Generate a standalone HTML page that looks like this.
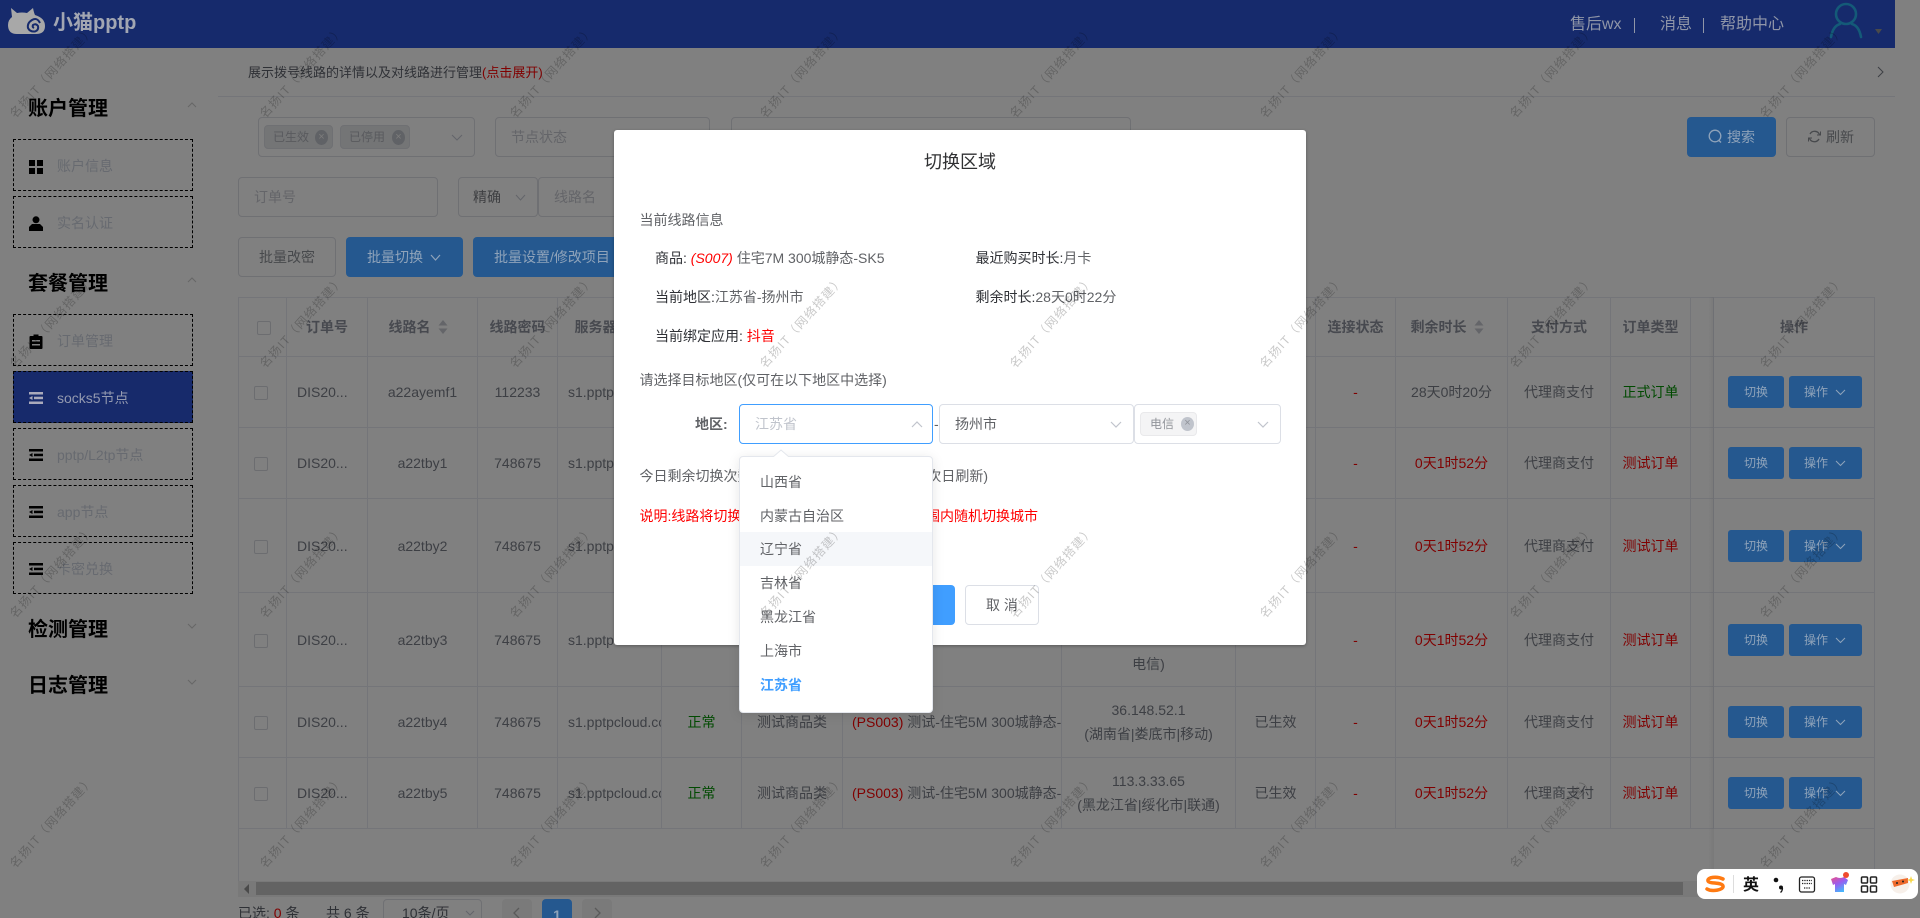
<!DOCTYPE html>
<html lang="zh"><head><meta charset="utf-8"><title>切换区域</title>
<style>
*{box-sizing:border-box}
html{margin:0;padding:0;width:1920px;height:918px;overflow:hidden}
body{margin:0;padding:0;width:1920px;height:918px;overflow:hidden;position:relative;background:#808080;font-family:"Liberation Sans","Noto Sans CJK SC",sans-serif;font-size:14px;color:#3d3f44}
.a{position:absolute;white-space:nowrap;line-height:20px}
.box{position:absolute;border:1px solid #6f7073;border-radius:4px}
.sec{position:absolute;left:28px;font-size:20px;font-weight:700;color:#000;line-height:28px;white-space:nowrap}
.it{position:absolute;left:13px;width:180px;height:52px;border:1px dashed #000;color:#676a70}
.it svg{position:absolute;left:15px}
.it span{position:absolute;left:43px;top:16px;line-height:20px;white-space:nowrap}
.btn{position:absolute;border-radius:4px;text-align:center;white-space:nowrap}
.pri{background:#25588f;color:#8fa3ba}
.def{border:1px solid #6f7073;color:#47494c}
.tag{position:absolute;height:24px;background:#747576;border:1px solid #6f7073;border-radius:4px;font-size:12px;color:#595a5e;line-height:22px;padding-left:8px}
.tag i{position:absolute;right:4px;top:4px;width:13px;height:15px;border-radius:50%;background:#606266;color:#7c7c7c;font-style:normal;font-size:11px;line-height:14px;text-align:center;padding:0}
table{position:absolute;left:238px;top:297px;border-collapse:separate;border-spacing:0;table-layout:fixed;width:1637px}
td,th{border-right:1px solid #747579;border-bottom:1px solid #747579;padding:0;text-align:center;overflow:hidden;white-space:nowrap;font-weight:400;line-height:24px}
th{border-top:1px solid #747579;font-weight:700;color:#47494f;height:60px}
td{height:71px}
tr.t td{height:94px}
td:first-child,th:first-child{border-left:1px solid #747579}
.l{text-align:left;padding-left:10px}
.r{color:#800000}.g{color:#004a00}
.cb{display:inline-block;width:14px;height:14px;border:1px solid #6c6d70;border-radius:2px;vertical-align:middle;margin-left:-3px}
.sw,.op{position:absolute;top:0;height:32px;border-radius:3px;background:#25588f;color:#8fa3ba;font-size:12px;line-height:32px;text-align:center}
.wm{position:absolute;font-size:12px;letter-spacing:1.2px;line-height:14px;color:rgba(0,0,0,.22);white-space:nowrap;transform:translate(-50%,-50%) rotate(-48deg);z-index:50}
.dlg{position:absolute;left:614px;top:130px;width:692px;height:515px;background:#fff;border-radius:3px;box-shadow:0 1px 3px rgba(0,0,0,.3)}
.sel{position:absolute;top:404px;height:40px;border:1px solid #dcdfe6;border-radius:4px;background:#fff}
.dp{position:absolute;left:739px;top:456px;width:194px;height:257px;background:#fff;border:1px solid #e4e7ed;border-radius:4px;box-shadow:0 2px 12px rgba(0,0,0,.1)}
.dp div{position:absolute;left:0;width:192px;height:34px;line-height:35px;padding-left:20px;color:#606266;font-size:14px}
.dk{color:#2f3136}.gy{color:#606266}
</style></head><body>

<!-- header -->
<div style="position:absolute;left:0;top:0;width:1895px;height:48px;background:#162a6c"></div>
<svg style="position:absolute;left:8px;top:8px" width="38" height="28" viewBox="0 0 38 28"><path d="M3 0 L9 5 Q14 4 19 5 L25 0 Q26 5 27 7 Q37 10 37 18 Q37 26 28 26 L9 26 Q0 26 0 17 Q0 12 4 9 Z" fill="#a8a8a8"/><path d="M32 15 Q29 9 24 12 Q19 15 20 20 Q22 24 27 23.500 Q31 22 30 18 Q28 15 25 17 Q24 19 26 20" fill="none" stroke="#162a6c" stroke-width="2"/></svg>
<div class="a" style="left:53px;top:13px;font-size:20px;font-weight:700;color:#a2a6b2">小猫pptp</div>
<div class="a" style="left:1570px;top:15px;font-size:16px;color:#9096a8">售后wx</div>
<div style="position:absolute;left:1634px;top:18px;width:1px;height:15px;background:#9096a8"></div>
<div class="a" style="left:1660px;top:15px;font-size:16px;color:#9096a8">消息</div>
<div style="position:absolute;left:1703px;top:18px;width:1px;height:15px;background:#9096a8"></div>
<div class="a" style="left:1720px;top:15px;font-size:16px;color:#9096a8">帮助中心</div>
<svg style="position:absolute;left:1828px;top:2px" width="60" height="38" viewBox="0 0 60 38"><circle cx="18" cy="12" r="10" fill="none" stroke="#145a78" stroke-width="2.600"/><path d="M3 35 Q5 24 12 22 M24 22 Q31 24 33 35" fill="none" stroke="#145a78" stroke-width="2.600" stroke-linecap="round"/><path d="M47 27 L54 27 L50.500 32 Z" fill="#4a4a4a"/></svg>

<!-- sidebar -->
<div class="sec" style="top:95px">账户管理</div>
<svg style="position:absolute;left:187px;top:102px" width="10" height="6"><path d="M1 5 L5 1 L9 5" fill="none" stroke="#666" stroke-width="1"/></svg>
<div class="it" style="top:139px"><svg style="top:20px" width="14" height="14"><rect width="6" height="6" fill="#000"/><rect x="8" width="6" height="6" fill="#000"/><rect y="8" width="6" height="6" fill="#000"/><rect x="8" y="8" width="6" height="6" fill="#000"/></svg><span>账户信息</span></div>
<div class="it" style="top:196px"><svg style="top:19px" width="14" height="15"><circle cx="7" cy="3.800" r="3.500" fill="#000"/><path d="M3 8 L11 8 L14 11 L14 15 L0 15 L0 11 Z" fill="#000"/></svg><span>实名认证</span></div>
<div class="sec" style="top:270px">套餐管理</div>
<svg style="position:absolute;left:187px;top:277px" width="10" height="6"><path d="M1 5 L5 1 L9 5" fill="none" stroke="#666" stroke-width="1"/></svg>
<div class="it" style="top:314px"><svg style="top:19px" width="14" height="15"><path d="M1.500 2 L4.500 2 L4.500 0.500 L9.500 0.500 L9.500 2 L12.500 2 Q13.500 2 13.500 3 L13.500 14 Q13.500 15 12.500 15 L1.500 15 Q0.500 15 0.500 14 L0.500 3 Q0.500 2 1.500 2 Z" fill="#000"/><rect x="3" y="6" width="8" height="1.500" fill="#808080"/><rect x="3" y="10" width="8" height="1.500" fill="#808080"/></svg><span>订单管理</span></div>
<div class="it" style="top:371px;background:#172a6b;color:#949ab0"><svg style="top:20px" width="14" height="12" viewBox="0 0 14 12"><rect width="14" height="2.500" fill="#aab"/><rect x="5" y="4.700" width="9" height="2.500" fill="#aab"/><path d="M0 6 L3.500 4 V8 Z" fill="#aab"/><rect y="9.500" width="14" height="2.500" fill="#aab"/></svg><span>socks5节点</span></div>
<div class="it" style="top:428px"><svg style="top:20px" width="14" height="12" viewBox="0 0 14 12"><rect width="14" height="2.500"/><rect x="5" y="4.700" width="9" height="2.500"/><path d="M0 6 L3.500 4 V8 Z"/><rect y="9.500" width="14" height="2.500"/></svg><span>pptp/L2tp节点</span></div>
<div class="it" style="top:485px"><svg style="top:20px" width="14" height="12" viewBox="0 0 14 12"><rect width="14" height="2.500"/><rect x="5" y="4.700" width="9" height="2.500"/><path d="M0 6 L3.500 4 V8 Z"/><rect y="9.500" width="14" height="2.500"/></svg><span>app节点</span></div>
<div class="it" style="top:542px"><svg style="top:20px" width="14" height="12" viewBox="0 0 14 12"><rect width="14" height="2.500"/><rect x="5" y="4.700" width="9" height="2.500"/><path d="M0 6 L3.500 4 V8 Z"/><rect y="9.500" width="14" height="2.500"/></svg><span>卡密兑换</span></div>
<div class="sec" style="top:616px">检测管理</div>
<svg style="position:absolute;left:187px;top:623px" width="10" height="6"><path d="M1 1 L5 5 L9 1" fill="none" stroke="#666" stroke-width="1"/></svg>
<div class="sec" style="top:672px">日志管理</div>
<svg style="position:absolute;left:187px;top:679px" width="10" height="6"><path d="M1 1 L5 5 L9 1" fill="none" stroke="#666" stroke-width="1"/></svg>

<!-- top notice -->
<div class="a dk" style="left:248px;top:63px;font-size:13px">展示拨号线路的详情以及对线路进行管理<span class="r">(点击展开)</span></div>
<div style="position:absolute;left:218px;top:96px;width:1677px;height:1px;background:#747579"></div>
<svg style="position:absolute;left:1877px;top:66px" width="7" height="12"><path d="M1 1 L6 6 L1 11" fill="none" stroke="#3d3f44" stroke-width="1"/></svg>

<!-- filters -->
<div class="box" style="left:258px;top:117px;width:217px;height:40px"></div>
<div class="tag" style="left:264px;top:125px;width:69px">已生效<i>×</i></div>
<div class="tag" style="left:340px;top:125px;width:70px">已停用<i>×</i></div>
<svg style="position:absolute;left:451px;top:134px" width="12" height="7"><path d="M1 1 L6 6 L11 1" fill="none" stroke="#63656a" stroke-width="1"/></svg>
<div class="box" style="left:495px;top:117px;width:215px;height:40px"></div>
<div class="a" style="left:511px;top:127px;color:#646569">节点状态</div>
<div class="box" style="left:731px;top:117px;width:400px;height:40px"></div>
<div class="btn pri" style="left:1687px;top:117px;width:89px;height:40px;line-height:40px;padding-left:40px;text-align:left">搜索</div>
<svg style="position:absolute;left:1708px;top:129px" width="15" height="15"><circle cx="7" cy="7" r="5.800" fill="none" stroke="#8fa3ba" stroke-width="1.300"/><path d="M10.500 11 L13 13.500" stroke="#8fa3ba" stroke-width="1.300"/></svg>
<div class="btn def" style="left:1786px;top:117px;width:89px;height:40px;line-height:38px;padding-left:39px;text-align:left">刷新</div>
<svg style="position:absolute;left:1808px;top:130px" width="13" height="13"><path d="M11.500 4.500 A5.300 5.300 0 0 0 2 4 M1.500 8.500 A5.300 5.300 0 0 0 11 9" fill="none" stroke="#47494c" stroke-width="1.300"/><path d="M12.500 1.500 V5 H9 M0.500 11.500 V8 H4" fill="none" stroke="#47494c" stroke-width="1"/></svg>

<div class="box" style="left:238px;top:177px;width:200px;height:40px"></div>
<div class="a" style="left:254px;top:187px;color:#646569">订单号</div>
<div class="box" style="left:458px;top:177px;width:80px;height:40px"></div>
<div class="a" style="left:473px;top:187px;color:#3e3f42">精确</div>
<svg style="position:absolute;left:515px;top:194px" width="11" height="7"><path d="M1 1 L5.500 6 L10 1" fill="none" stroke="#63656a" stroke-width="1"/></svg>
<div class="box" style="left:538px;top:177px;width:100px;height:40px"></div>
<div class="a" style="left:554px;top:187px;color:#646569">线路名</div>

<div class="btn def" style="left:238px;top:237px;width:98px;height:40px;line-height:38px">批量改密</div>
<div class="btn pri" style="left:346px;top:237px;width:117px;height:40px;line-height:40px;padding-left:21px;text-align:left">批量切换</div>
<svg style="position:absolute;left:430px;top:254px" width="11" height="7"><path d="M1 1 L5.500 6 L10 1" fill="none" stroke="#8fa3ba" stroke-width="1.200"/></svg>
<div class="btn pri" style="left:473px;top:237px;width:157px;height:40px;line-height:40px;padding-left:21px;text-align:left">批量设置/修改项目</div>
<div class="a dk" style="right:1045.500px;top:248px;font-size:13px">您当前共6条线路</div>

<!-- table -->
<table><colgroup><col style="width:49px"><col style="width:81px"><col style="width:110px"><col style="width:80px"><col style="width:104px"><col style="width:80px"><col style="width:101px"><col style="width:219px"><col style="width:174px"><col style="width:80px"><col style="width:80px"><col style="width:112px"><col style="width:103px"><col style="width:80px"><col style="width:23px"><col style="width:161px"></colgroup>
<tr><th><span class="cb" style="margin-left:3px"></span></th><th>订单号</th><th style="padding-right:8px">线路名 <svg width="10" height="14" style="vertical-align:-2px;margin-left:4px"><path d="M5 0 L9.500 5.500 H0.500 Z M5 14 L9.500 8.500 H0.500 Z" fill="#646569"/></svg></th><th>线路密码</th><th>服务器地址</th><th>节点状态</th><th>商品类型</th><th>商品名称</th><th>节点IP</th><th>状态</th><th>连接状态</th><th style="padding-right:8px">剩余时长 <svg width="10" height="14" style="vertical-align:-2px;margin-left:4px"><path d="M5 0 L9.500 5.500 H0.500 Z M5 14 L9.500 8.500 H0.500 Z" fill="#646569"/></svg></th><th>支付方式</th><th>订单类型</th><th></th><th>操作</th></tr>
<tr><td><span class="cb"></span></td><td class="l">DIS20...</td><td>a22ayemf1</td><td>112233</td><td class="l">s1.pptpcloud.com</td><td class="g">正常</td><td>测试商品类</td><td class="l" style="padding-left:9px"><span class="r">(S007)</span> 住宅7M 300城静态-SK5</td><td>36.148.52.1</td><td>已生效</td><td class="r">-</td><td>28天0时20分</td><td>代理商支付</td><td class="g">正式订单</td><td></td><td></td></tr>
<tr><td><span class="cb"></span></td><td class="l">DIS20...</td><td>a22tby1</td><td>748675</td><td class="l">s1.pptpcloud.com</td><td class="g">正常</td><td>测试商品类</td><td class="l" style="padding-left:9px"><span class="r">(PS003)</span> 测试-住宅5M 300城静态-</td><td>36.148.52.1</td><td>已生效</td><td class="r">-</td><td class="r">0天1时52分</td><td>代理商支付</td><td class="r">测试订单</td><td></td><td></td></tr>
<tr class="t"><td><span class="cb"></span></td><td class="l">DIS20...</td><td>a22tby2</td><td>748675</td><td class="l">s1.pptpcloud.com</td><td class="g">正常</td><td>测试商品类</td><td class="l" style="padding-left:9px"><span class="r">(PS003)</span> 测试-住宅5M 300城静态-</td><td>36.148.52.1</td><td>已生效</td><td class="r">-</td><td class="r">0天1时52分</td><td>代理商支付</td><td class="r">测试订单</td><td></td><td></td></tr>
<tr class="t"><td><span class="cb"></span></td><td class="l">DIS20...</td><td>a22tby3</td><td>748675</td><td class="l">s1.pptpcloud.com</td><td></td><td></td><td></td><td>36.148.52.1<br><br>电信)</td><td></td><td class="r">-</td><td class="r">0天1时52分</td><td>代理商支付</td><td class="r">测试订单</td><td></td><td></td></tr>
<tr><td><span class="cb"></span></td><td class="l">DIS20...</td><td>a22tby4</td><td>748675</td><td class="l">s1.pptpcloud.com</td><td class="g">正常</td><td>测试商品类</td><td class="l" style="padding-left:9px"><span class="r">(PS003)</span> 测试-住宅5M 300城静态-</td><td>36.148.52.1<br>(湖南省|娄底市|移动)</td><td>已生效</td><td class="r">-</td><td class="r">0天1时52分</td><td>代理商支付</td><td class="r">测试订单</td><td></td><td></td></tr>
<tr><td><span class="cb"></span></td><td class="l">DIS20...</td><td>a22tby5</td><td>748675</td><td class="l">s1.pptpcloud.com</td><td class="g">正常</td><td>测试商品类</td><td class="l" style="padding-left:9px"><span class="r">(PS003)</span> 测试-住宅5M 300城静态-</td><td>113.3.33.65<br>(黑龙江省|绥化市|联通)</td><td>已生效</td><td class="r">-</td><td class="r">0天1时52分</td><td>代理商支付</td><td class="r">测试订单</td><td></td><td></td></tr>
</table>
<div style="position:absolute;left:1708px;top:297px;width:6px;height:584px;background:linear-gradient(to right,rgba(0,0,0,0),rgba(0,0,0,.05))"></div>
<div style="position:absolute;left:238px;top:829px;width:1px;height:52px;background:#747579"></div>
<div style="position:absolute;left:1874px;top:829px;width:1px;height:52px;background:#747579"></div>

<!-- row buttons -->
<div style="position:absolute;left:1728px;top:376px"><div class="sw" style="left:0;width:56px">切换</div><div class="op" style="left:61px;width:73px;text-align:left;padding-left:15px">操作</div><svg style="position:absolute;left:107px;top:13px" width="11" height="7"><path d="M1 1 L5.500 5.500 L10 1" fill="none" stroke="#8fa3ba" stroke-width="1"/></svg></div>
<div style="position:absolute;left:1728px;top:447px"><div class="sw" style="left:0;width:56px">切换</div><div class="op" style="left:61px;width:73px;text-align:left;padding-left:15px">操作</div><svg style="position:absolute;left:107px;top:13px" width="11" height="7"><path d="M1 1 L5.500 5.500 L10 1" fill="none" stroke="#8fa3ba" stroke-width="1"/></svg></div>
<div style="position:absolute;left:1728px;top:530px"><div class="sw" style="left:0;width:56px">切换</div><div class="op" style="left:61px;width:73px;text-align:left;padding-left:15px">操作</div><svg style="position:absolute;left:107px;top:13px" width="11" height="7"><path d="M1 1 L5.500 5.500 L10 1" fill="none" stroke="#8fa3ba" stroke-width="1"/></svg></div>
<div style="position:absolute;left:1728px;top:624px"><div class="sw" style="left:0;width:56px">切换</div><div class="op" style="left:61px;width:73px;text-align:left;padding-left:15px">操作</div><svg style="position:absolute;left:107px;top:13px" width="11" height="7"><path d="M1 1 L5.500 5.500 L10 1" fill="none" stroke="#8fa3ba" stroke-width="1"/></svg></div>
<div style="position:absolute;left:1728px;top:706px"><div class="sw" style="left:0;width:56px">切换</div><div class="op" style="left:61px;width:73px;text-align:left;padding-left:15px">操作</div><svg style="position:absolute;left:107px;top:13px" width="11" height="7"><path d="M1 1 L5.500 5.500 L10 1" fill="none" stroke="#8fa3ba" stroke-width="1"/></svg></div>
<div style="position:absolute;left:1728px;top:777px"><div class="sw" style="left:0;width:56px">切换</div><div class="op" style="left:61px;width:73px;text-align:left;padding-left:15px">操作</div><svg style="position:absolute;left:107px;top:13px" width="11" height="7"><path d="M1 1 L5.500 5.500 L10 1" fill="none" stroke="#8fa3ba" stroke-width="1"/></svg></div>

<!-- scrollbar -->
<div style="position:absolute;left:238px;top:881px;width:1637px;height:16px;background:#797979"></div>
<div style="position:absolute;left:256px;top:882px;width:1427px;height:13px;background:#636363"></div>
<svg style="position:absolute;left:244px;top:884px" width="6" height="10"><path d="M5 0 V10 L0 5 Z" fill="#4a4a4a"/></svg>

<!-- pagination -->
<div class="a dk" style="left:238px;top:903px">已选: <span class="r">0</span> 条</div>
<div class="a dk" style="left:326px;top:903px">共 6 条</div>
<div class="box" style="left:383px;top:899px;width:99px;height:32px"></div>
<div class="a dk" style="left:402px;top:903px">10条/页</div>
<svg style="position:absolute;left:465px;top:910px" width="10" height="6"><path d="M1 1 L5 5 L9 1" fill="none" stroke="#63656a" stroke-width="1"/></svg>
<div class="btn" style="left:502px;top:899px;width:30px;height:32px;background:#7a7a7a"></div>
<svg style="position:absolute;left:513px;top:907px" width="7" height="11"><path d="M6 1 L1 6 L6 11" fill="none" stroke="#5a5a5a" stroke-width="1.300"/></svg>
<div class="btn pri" style="left:542px;top:899px;width:30px;height:32px;line-height:32px;font-weight:700">1</div>
<div class="btn" style="left:582px;top:899px;width:30px;height:32px;background:#7a7a7a"></div>
<svg style="position:absolute;left:594px;top:907px" width="7" height="11"><path d="M1 1 L6 6 L1 11" fill="none" stroke="#5a5a5a" stroke-width="1.300"/></svg>

<!-- dialog -->
<div class="dlg"></div>
<div class="a" style="left:614px;width:692px;top:152px;text-align:center;font-size:18px;color:#303133">切换区域</div>
<div class="a gy" style="left:639.500px;top:210px">当前线路信息</div>
<div class="a gy" style="left:655px;top:248px"><span class="dk">商品:</span> <i style="color:#f00">(S007)</i> 住宅7M 300城静态-SK5</div>
<div class="a gy" style="left:975.500px;top:248px"><span class="dk">最近购买时长:</span>月卡</div>
<div class="a gy" style="left:655px;top:287px"><span class="dk">当前地区:</span>江苏省-扬州市</div>
<div class="a gy" style="left:975.500px;top:287px"><span class="dk">剩余时长:</span>28天0时22分</div>
<div class="a dk" style="left:655px;top:326px">当前绑定应用: <span style="color:#f00">抖音</span></div>
<div class="a gy" style="left:639.500px;top:370px">请选择目标地区(仅可在以下地区中选择)</div>
<div class="a" style="left:695px;top:414px;color:#606266;font-weight:700">地区:</div>

<div class="sel" style="left:739px;width:194px;border-color:#409eff"></div>
<div class="a" style="left:755px;top:414px;color:#c0c4cc">江苏省</div>
<svg style="position:absolute;left:911px;top:421px" width="12" height="7"><path d="M1 6 L6 1 L11 6" fill="none" stroke="#c0c4cc" stroke-width="1.200"/></svg>
<div class="a gy" style="left:934px;top:414px">-</div>
<div class="sel" style="left:939px;width:195px"></div>
<div class="a gy" style="left:955px;top:414px">扬州市</div>
<svg style="position:absolute;left:1110px;top:421px" width="12" height="7"><path d="M1 1 L6 6 L11 1" fill="none" stroke="#c0c4cc" stroke-width="1.200"/></svg>
<div class="sel" style="left:1134px;width:147px"></div>
<div class="a" style="left:1140px;top:412px;width:57px;height:24px;background:#f4f4f5;border:1px solid #e9e9eb;border-radius:4px;font-size:12px;color:#909399;line-height:22px;padding-left:9px">电信<span style="position:absolute;right:2px;top:4px;width:13px;height:14px;border-radius:50%;background:#c0c4cc;color:#909399;font-size:11px;line-height:13px;text-align:center">×</span></div>
<svg style="position:absolute;left:1257px;top:421px" width="12" height="7"><path d="M1 1 L6 6 L11 1" fill="none" stroke="#c0c4cc" stroke-width="1.200"/></svg>

<div class="a gy" style="left:639.500px;top:466px">今日剩余切换次数:5</div>
<div class="a gy" style="right:932px;top:466px">次(次日刷新)</div>
<div class="a" style="left:639.500px;top:506px;color:#f00">说明:线路将切换至目标地区</div>
<div class="a" style="right:882px;top:506px;color:#f00">地区范围内随机切换城市</div>

<div class="btn" style="left:860px;top:585px;width:95px;height:40px;background:#409eff"></div>
<div class="btn" style="left:965px;top:585px;width:74px;height:40px;background:#fff;border:1px solid #dcdfe6;color:#606266;line-height:38px">取 消</div>

<!-- dropdown -->
<svg style="position:absolute;left:773px;top:449px;z-index:3" width="16" height="8"><path d="M0 8 L8 1 L16 8" fill="#fff" stroke="#e4e7ed"/></svg>
<div class="dp" style="z-index:2">
<div style="top:8px">山西省</div>
<div style="top:42px">内蒙古自治区</div>
<div style="top:75px;background:#f5f7fa">辽宁省</div>
<div style="top:109px">吉林省</div>
<div style="top:143px">黑龙江省</div>
<div style="top:177px">上海市</div>
<div style="top:211px;color:#409eff;font-weight:700">江苏省</div>
</div>

<!-- watermark grid -->
<span class="wm" style="left:52px;top:72px">名扬IT（网络搭建）</span><span class="wm" style="left:302px;top:72px">名扬IT（网络搭建）</span><span class="wm" style="left:552px;top:72px">名扬IT（网络搭建）</span><span class="wm" style="left:802px;top:72px">名扬IT（网络搭建）</span><span class="wm" style="left:1052px;top:72px">名扬IT（网络搭建）</span><span class="wm" style="left:1302px;top:72px">名扬IT（网络搭建）</span><span class="wm" style="left:1552px;top:72px">名扬IT（网络搭建）</span><span class="wm" style="left:1802px;top:72px">名扬IT（网络搭建）</span>
<span class="wm" style="left:52px;top:322px">名扬IT（网络搭建）</span><span class="wm" style="left:302px;top:322px">名扬IT（网络搭建）</span><span class="wm" style="left:552px;top:322px">名扬IT（网络搭建）</span><span class="wm" style="left:802px;top:322px">名扬IT（网络搭建）</span><span class="wm" style="left:1052px;top:322px">名扬IT（网络搭建）</span><span class="wm" style="left:1302px;top:322px">名扬IT（网络搭建）</span><span class="wm" style="left:1552px;top:322px">名扬IT（网络搭建）</span><span class="wm" style="left:1802px;top:322px">名扬IT（网络搭建）</span>
<span class="wm" style="left:52px;top:572px">名扬IT（网络搭建）</span><span class="wm" style="left:302px;top:572px">名扬IT（网络搭建）</span><span class="wm" style="left:552px;top:572px">名扬IT（网络搭建）</span><span class="wm" style="left:802px;top:572px">名扬IT（网络搭建）</span><span class="wm" style="left:1052px;top:572px">名扬IT（网络搭建）</span><span class="wm" style="left:1302px;top:572px">名扬IT（网络搭建）</span><span class="wm" style="left:1552px;top:572px">名扬IT（网络搭建）</span><span class="wm" style="left:1802px;top:572px">名扬IT（网络搭建）</span>
<span class="wm" style="left:52px;top:822px">名扬IT（网络搭建）</span><span class="wm" style="left:302px;top:822px">名扬IT（网络搭建）</span><span class="wm" style="left:552px;top:822px">名扬IT（网络搭建）</span><span class="wm" style="left:802px;top:822px">名扬IT（网络搭建）</span><span class="wm" style="left:1052px;top:822px">名扬IT（网络搭建）</span><span class="wm" style="left:1302px;top:822px">名扬IT（网络搭建）</span><span class="wm" style="left:1552px;top:822px">名扬IT（网络搭建）</span><span class="wm" style="left:1802px;top:822px">名扬IT（网络搭建）</span>

<!-- IME bar -->
<svg style="position:absolute;left:1697px;top:869px;z-index:60" width="221" height="30" viewBox="0 0 221 30">
<defs><linearGradient id="sh" x1="0" y1="0" x2="0.6" y2="1"><stop offset="0" stop-color="#ee4f86"/><stop offset=".5" stop-color="#9a5cf0"/><stop offset="1" stop-color="#45b6fb"/></linearGradient></defs>
<rect width="221" height="30" rx="8" fill="#fff"/>
<path d="M26 10 C20 7 10 8 11 12 C12 15 25 13 26 17 C27 21 15 23 10 20" fill="none" stroke="#ff7a12" stroke-width="3.500" stroke-linecap="round"/>
<rect x="36" y="6" width="1" height="18" fill="#ddd"/>
<text x="54" y="21" text-anchor="middle" font-size="16" font-weight="700" fill="#111" font-family="Noto Sans CJK SC,sans-serif">英</text>
<circle cx="79" cy="11" r="2.300" fill="#111"/><circle cx="84" cy="18.500" r="2" fill="#111"/><path d="M85.500 19 Q85.500 22 83.500 23.500" fill="none" stroke="#111" stroke-width="1.200"/>
<rect x="102.500" y="8" width="15" height="15" rx="2" fill="none" stroke="#222" stroke-width="1.300"/>
<path d="M105 11.500 H115 M105 14.500 H115 M107 19 H113" stroke="#222" stroke-width="1.300" stroke-dasharray="1.300 1"/>
<path d="M134 10 L139 8 Q143 10 147 8 L151 11 L149 16 L147 15 L147 23 L138 23 L138 15 L136 16 Z" fill="url(#sh)"/>
<circle cx="149" cy="6" r="3" fill="#f04b2e"/>
<rect x="164.500" y="8" width="6" height="6" rx="1" fill="none" stroke="#222" stroke-width="1.500"/><rect x="173.500" y="8" width="6" height="6" rx="1" fill="none" stroke="#222" stroke-width="1.500"/><rect x="164.500" y="17" width="6" height="6" rx="1" fill="none" stroke="#222" stroke-width="1.500"/><rect x="173.500" y="17" width="6" height="6" rx="1" fill="none" stroke="#222" stroke-width="1.500"/>
<circle cx="203" cy="15" r="9.500" fill="#f7f0ea"/>
<path d="M195 12 L211 9 L211 14 L197 18 Z" fill="#ee6a2c"/>
<circle cx="200" cy="14" r="1" fill="#222"/><circle cx="206" cy="12.500" r="1" fill="#222"/>
<path d="M214 7 L215 10 L218 11 L215 12 L214 15 L213 12 L210 11 L213 10 Z" fill="#f7d84a"/>
</svg>
</body></html>
